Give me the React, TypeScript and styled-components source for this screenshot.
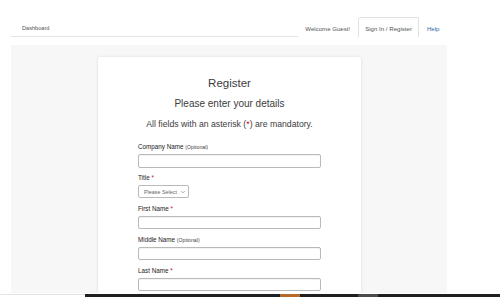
import React from "react";
import styled, { createGlobalStyle } from "styled-components";

const Global = createGlobalStyle`
  html, body { margin: 0; padding: 0; background: #fff; }
  body { font-family: "Liberation Sans", Arial, sans-serif; color: #333; }
  * { box-sizing: border-box; }
`;

const Page = styled.div`
  width: 500px;
  height: 297px;
  display: flex;
  flex-direction: column;
  overflow: hidden;
`;

const Header = styled.header`
  margin: 17px 53px 0 11px;
  height: 20px;
  border-bottom: 1px solid #e6e6e6;
  display: flex;
  align-items: stretch;
  justify-content: space-between;
  padding: 0 0 0 11px;
  font-size: 6.1px;
`;

const NavLeft = styled.div`
  display: flex;
  align-items: center;
  color: #555;
  font-size: 5.6px;
  padding-top: 2px;
`;

const NavRight = styled.div`
  display: flex;
  align-items: stretch;
`;

const NavItem = styled.div<{ $active?: boolean; $link?: boolean }>`
  display: flex;
  align-items: center;
  padding: 2px 6.5px 0;
  color: ${(p) => (p.$link ? "#2b6a9e" : "#555")};
  background: #fff;
  border: 1px solid ${(p) => (p.$active ? "#e2e2e2" : "transparent")};
  border-bottom: none;
  margin-bottom: -1px;
  border-radius: 2px 2px 0 0;
`;

const Main = styled.main`
  flex: 1;
  margin: 8px 53px 0 11px;
  background: #f7f7f7;
  padding-top: 12px;
  display: flex;
  justify-content: center;
  overflow: hidden;
`;

const Card = styled.section`
  width: 263px;
  background: #fff;
  border-radius: 2px;
  box-shadow: 0 0 3px rgba(0, 0, 0, 0.12);
  padding: 19px 40px 0;
  display: flex;
  flex-direction: column;
  align-items: stretch;
  margin-left: 1px;
`;

const Title = styled.h1`
  margin: 0;
  font-weight: normal;
  font-size: 11.5px;
  line-height: 14px;
  text-align: center;
  color: #3c3c3c;
`;

const Subtitle = styled.h2`
  margin: 8px 0 0;
  font-weight: normal;
  font-size: 10px;
  line-height: 12px;
  text-align: center;
  color: #3c3c3c;
`;

const Note = styled.p`
  margin: 9px 0 0;
  font-size: 8.7px;
  line-height: 11px;
  text-align: center;
  color: #3c3c3c;
`;

const Req = styled.span`
  color: #c8102e;
`;

const Form = styled.form`
  margin-top: 13px;
  display: flex;
  flex-direction: column;
  gap: 6.5px;
`;

const Field = styled.div`
  display: flex;
  flex-direction: column;
  gap: 3px;
`;

const Label = styled.label`
  font-size: 6.3px;
  line-height: 8px;
  color: #222;
  height: 8px;
`;

const Optional = styled.span`
  font-size: 5.2px;
  color: #444;
`;

const Input = styled.div`
  height: 13.5px;
  border: 1px solid #b9b9b9;
  border-radius: 2px;
  background: #fff;
  box-shadow: inset 0 1px 1px rgba(0, 0, 0, 0.05);
`;

const Select = styled.div`
  width: 51px;
  height: 13px;
  border: 1px solid #b9b9b9;
  border-radius: 2px;
  background: #fff;
  display: flex;
  align-items: center;
  justify-content: space-between;
  padding: 0 3px 0 5px;
  font-size: 5.4px;
  color: #666;
`;

const Chevron = styled.svg`
  width: 4px;
  height: 4px;
`;

const Strip = styled.div`
  height: 3px;
  display: flex;
  margin-top: 1px;
`;

const StripLeft = styled.div`
  width: 85px;
  border-top: 1px solid #e4e4e4;
`;

const Taskbar = styled.div`
  flex: 1;
  background: #202020;
  display: flex;
`;

const TaskSeg = styled.div<{ $w: number; $color: string }>`
  width: ${(p) => p.$w}px;
  background: ${(p) => p.$color};
`;

export default function App() {
  return (
    <Page>
      <Global />
      <Header>
        <NavLeft>Dashboard</NavLeft>
        <NavRight>
          <NavItem>Welcome Guest!</NavItem>
          <NavItem $active>Sign In / Register</NavItem>
          <NavItem $link>Help</NavItem>
        </NavRight>
      </Header>
      <Main>
        <Card>
          <Title>Register</Title>
          <Subtitle>Please enter your details</Subtitle>
          <Note>
            All fields with an asterisk (<Req>*</Req>) are mandatory.
          </Note>
          <Form>
            <Field>
              <Label>
                Company Name <Optional>(Optional)</Optional>
              </Label>
              <Input />
            </Field>
            <Field>
              <Label>
                Title <Req>*</Req>
              </Label>
              <Select>
                <span>Please Select</span>
                <Chevron viewBox="0 0 8 8">
                  <path d="M1 2.5 L4 5.5 L7 2.5" fill="none" stroke="#666" strokeWidth="1.2" />
                </Chevron>
              </Select>
            </Field>
            <Field>
              <Label>
                First Name <Req>*</Req>
              </Label>
              <Input />
            </Field>
            <Field>
              <Label>
                Middle Name <Optional>(Optional)</Optional>
              </Label>
              <Input />
            </Field>
            <Field>
              <Label>
                Last Name <Req>*</Req>
              </Label>
              <Input />
            </Field>
          </Form>
        </Card>
      </Main>
      <Strip>
        <StripLeft />
        <Taskbar>
          <TaskSeg $w={195} $color="#202020" />
          <TaskSeg $w={20} $color="#b86a2a" />
          <TaskSeg $w={58} $color="#202020" />
          <TaskSeg $w={20} $color="#4a4a4a" />
        </Taskbar>
      </Strip>
    </Page>
  );
}
